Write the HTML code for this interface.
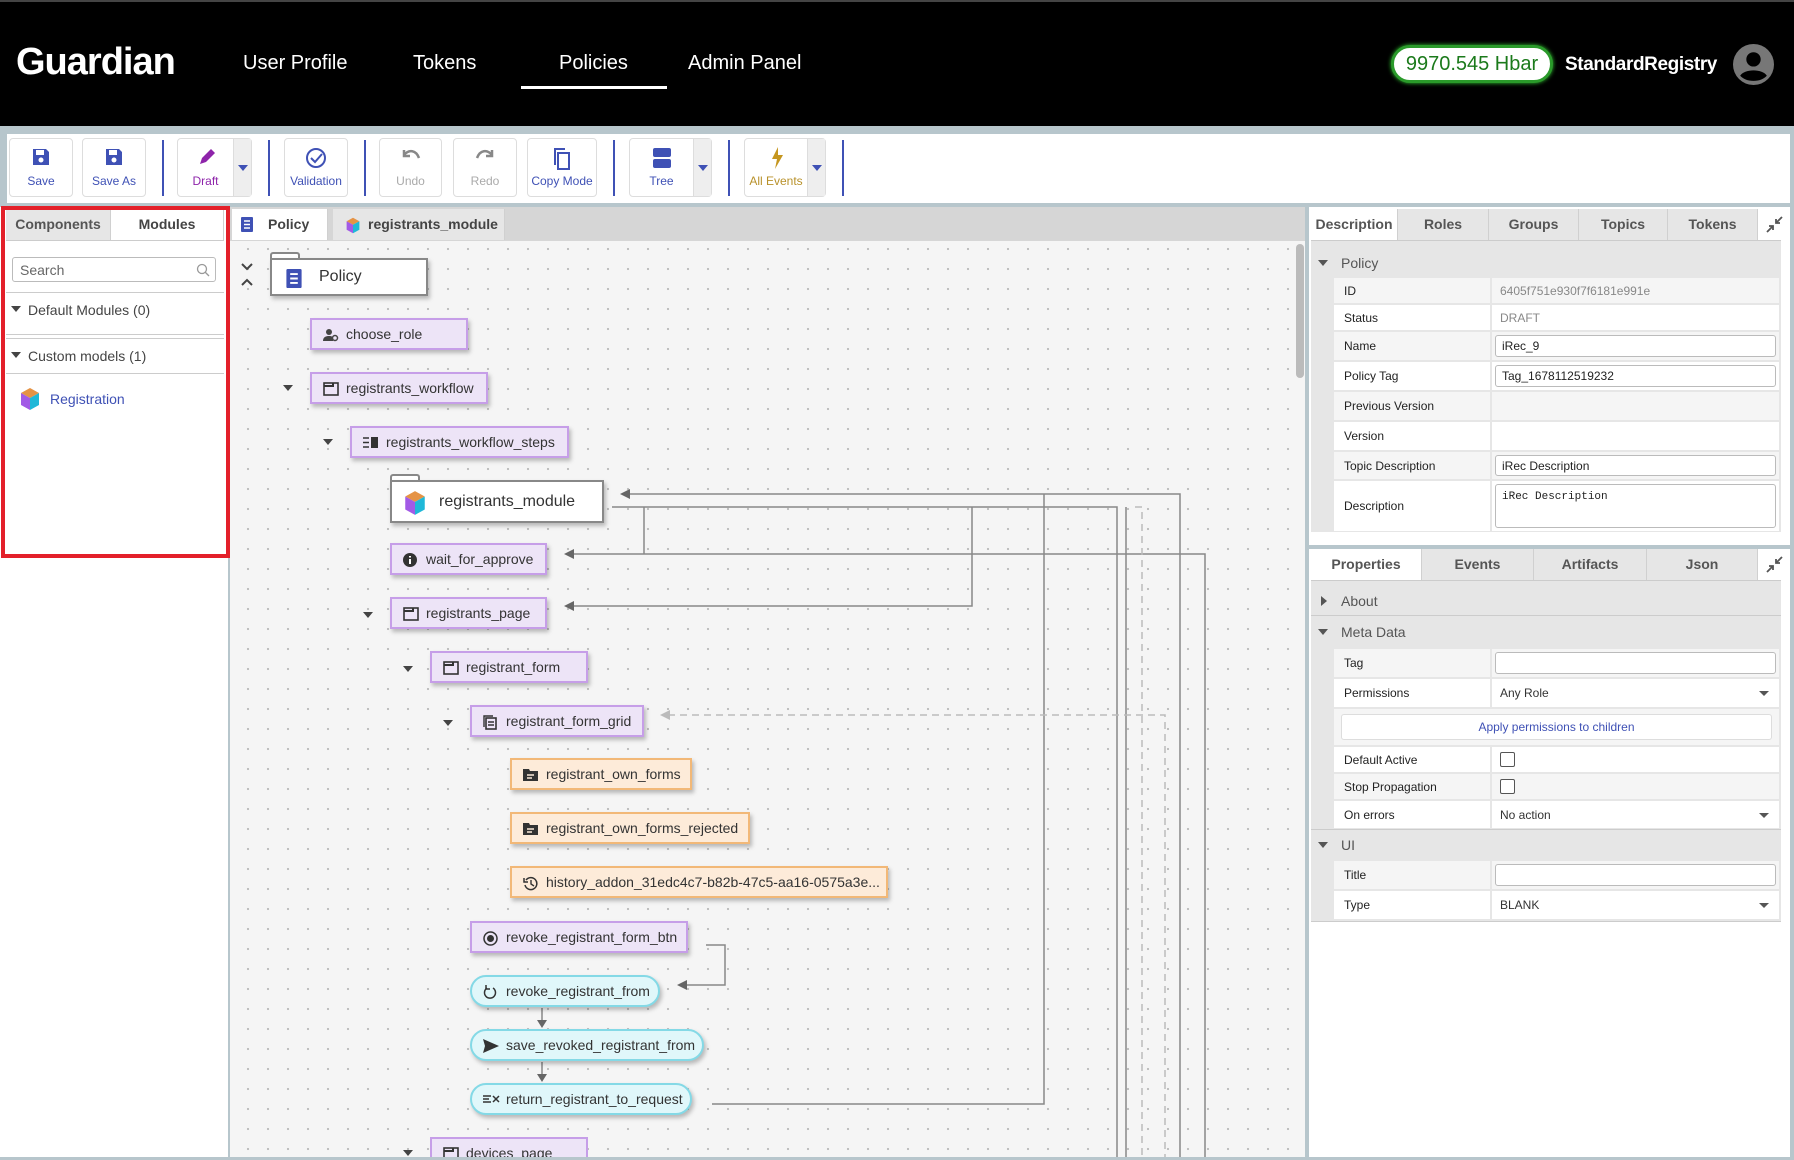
<!DOCTYPE html>
<html><head><meta charset="utf-8"><style>
*{box-sizing:border-box;margin:0;padding:0}
html,body{width:1794px;height:1160px;overflow:hidden}
body{background:#b7c6cc;font-family:"Liberation Sans",sans-serif;position:relative}
.a{position:absolute}
#hdr{left:0;top:0;width:1794px;height:126px;background:#000;border-top:2px solid #444}
.nav{color:#fff;font-size:20px;top:50px}
#tb{left:7px;top:134px;width:1783px;height:69px;background:#fff}
.btn{top:4px;height:59px;border:1px solid #ddd;border-radius:4px;background:#fff;text-align:center;font-size:12px;color:#3f51b5}
.btn span{position:absolute;left:0;right:0;bottom:8px}
.btn svg{position:absolute;left:50%;top:8px;transform:translateX(-50%)}
.dd{position:absolute;right:0;top:0;bottom:0;width:18px;background:#eee;border-left:1px solid #ddd}
.dd:after{content:"";position:absolute;left:4px;top:26px;border:5px solid transparent;border-top:6px solid #3f51b5}
.sep{top:6px;width:2px;height:56px;background:#3f51b5}
.panel{background:#fff}
.tab{position:absolute;top:0;height:31px;font-size:14px;font-weight:bold;color:#555;text-align:center;line-height:31px;background:#e6e6e6;border-right:1px solid #d0d0d0}
.node{position:absolute;height:32px;background:#ede4f7;border:2px solid #c69ee8;box-shadow:2px 3px 4px rgba(0,0,0,.25);font-size:14px;color:#333;line-height:28px;padding-left:34px;white-space:nowrap;overflow:hidden}
.or{background:#fdebd9;border-color:#f2b877}
.cy{background:#e0f7fa;border-color:#84d9e6;border-radius:17px}
.ic{position:absolute;left:11px;top:8px}
.car{position:absolute;width:0;height:0;border:5px solid transparent;border-top:6px solid #444}
.row{position:absolute;left:1334px;width:445px;font-size:12px;color:#222}
.row .l{position:absolute;left:0;top:0;bottom:0;width:156px;background:#f5f5f5;padding-left:10px;display:flex;align-items:center}
.row .v{position:absolute;left:158px;right:0;top:0;bottom:0;background:#f5f5f5;padding-left:8px;display:flex;align-items:center;color:#888}
.row.w .l,.row.w .v{background:#fff}
.inp{position:absolute;left:3px;right:3px;top:3px;bottom:3px;border:1px solid #bbb;border-radius:3px;background:#fff;padding-left:6px;display:flex;align-items:center;color:#222}
.sec{position:absolute;left:1311px;width:470px;background:#e6e6e6;font-size:14px;color:#555;padding-left:30px;display:flex;align-items:center}
.sec:before{content:"";position:absolute;left:7px;top:50%;margin-top:-3px;border:5px solid transparent;border-top:6px solid #555}
.sec.c:before{border:5px solid transparent;border-left:6px solid #555;margin-top:-5px;left:10px}
.sel:after{content:"";position:absolute;right:10px;top:50%;margin-top:-2px;border:5px solid transparent;border-top:5px solid #555}
.cb{width:15px;height:15px;border:1.5px solid #555;border-radius:2px;background:#fff}
</style></head><body>
<div id="hdr" class="a">
<div class="a" style="left:16px;top:39px;color:#fff;font-size:38px;font-weight:bold;letter-spacing:-1px">Guardian</div>
<div class="a nav" style="left:243px">User Profile</div>
<div class="a nav" style="left:413px">Tokens</div>
<div class="a nav" style="left:559px">Policies</div>
<div class="a" style="left:521px;top:84px;width:146px;height:3px;background:#fff"></div>
<div class="a nav" style="left:688px">Admin Panel</div>
<div class="a" style="left:1391px;top:43px;width:162px;height:38px;border-radius:19px;background:#fff;border:3px solid #2a9a2a;box-shadow:0 0 4px #3c3;color:#1b7a1b;font-size:20px;text-align:center;line-height:32px">9970.545 Hbar</div>
<div class="a" style="left:1565px;top:52px;color:#fff;font-size:19px;font-weight:bold;letter-spacing:-0.4px">StandardRegistry</div>
<svg class="a" style="left:1733px;top:42px" width="41" height="41" viewBox="0 0 40 40"><circle cx="20" cy="20" r="20" fill="#777"/><circle cx="20" cy="15" r="7" fill="#000"/><path d="M7 31c4-7 22-7 26 0c-3 3-7 5-13 5s-10-2-13-5z" fill="#000"/></svg>
</div>
<div id="tb" class="a">
<div class="a btn" style="left:2px;width:64px"><svg width="20" height="20" viewBox="0 0 20 20"><path d="M2 2h13l3 3v13H2z" fill="#3f51b5"/><rect x="5" y="3" width="8" height="5" fill="#fff"/><circle cx="10" cy="13" r="2.5" fill="#fff"/></svg><span>Save</span></div>
<div class="a btn" style="left:75px;width:64px"><svg width="20" height="20" viewBox="0 0 20 20"><path d="M2 2h13l3 3v13H2z" fill="#3f51b5"/><rect x="5" y="3" width="8" height="5" fill="#fff"/><circle cx="10" cy="13" r="2.5" fill="#fff"/></svg><span>Save As</span></div>
<div class="a sep" style="left:155px"></div>
<div class="a btn" style="left:170px;width:75px;color:#8e24aa"><svg style="left:29px" width="20" height="20" viewBox="0 0 20 20"><path d="M3 17l2-6 9-9 4 4-9 9z" fill="#8e24aa"/></svg><span style="right:18px">Draft</span><div class="dd"></div></div>
<div class="a sep" style="left:261px"></div>
<div class="a btn" style="left:277px;width:64px"><svg width="22" height="22" viewBox="0 0 22 22"><circle cx="11" cy="11" r="9" fill="none" stroke="#3f51b5" stroke-width="2"/><path d="M6 11l4 4 7-8" fill="none" stroke="#3f51b5" stroke-width="2"/></svg><span>Validation</span></div>
<div class="a sep" style="left:357px"></div>
<div class="a btn" style="left:372px;width:63px;color:#aaa"><svg width="22" height="16" viewBox="0 0 22 16"><path d="M4 8c5-6 12-5 15 3M4 3v6h6" fill="none" stroke="#888" stroke-width="2.5"/></svg><span>Undo</span></div>
<div class="a btn" style="left:446px;width:64px;color:#aaa"><svg width="22" height="16" viewBox="0 0 22 16"><path d="M18 8c-5-6-12-5-15 3M18 3v6h-6" fill="none" stroke="#888" stroke-width="2.5"/></svg><span>Redo</span></div>
<div class="a btn" style="left:520px;width:70px"><svg width="20" height="24" viewBox="0 0 20 24"><rect x="6" y="6" width="11" height="16" fill="none" stroke="#3f51b5" stroke-width="2"/><path d="M3 18V2h10" fill="none" stroke="#3f51b5" stroke-width="2"/></svg><span>Copy Mode</span></div>
<div class="a sep" style="left:606px"></div>
<div class="a btn" style="left:622px;width:83px"><svg style="left:32px" width="20" height="22" viewBox="0 0 20 22"><rect x="1" y="1" width="18" height="9" rx="2" fill="#3f51b5"/><rect x="1" y="12" width="18" height="9" rx="2" fill="#3f51b5"/></svg><span style="right:18px">Tree</span><div class="dd"></div></div>
<div class="a sep" style="left:721px"></div>
<div class="a btn" style="left:737px;width:82px;color:#b8912a"><svg style="left:32px" width="14" height="22" viewBox="0 0 14 22"><path d="M8 0L2 12h5l-2 10 8-14H8z" fill="#c5961f"/></svg><span style="right:18px">All Events</span><div class="dd"></div></div>
<div class="a sep" style="left:835px"></div>
</div>

<div class="a panel" style="left:0;top:207px;width:228px;height:951px"></div>
<div class="a tab" style="left:6px;top:209px;width:105px">Components</div>
<div class="a tab" style="left:111px;top:209px;width:113px;background:#fff;color:#444">Modules</div>
<div class="a" style="left:6px;top:240px;width:218px;height:1px;background:#ccc"></div>
<div class="a" style="left:12px;top:257px;width:204px;height:25px;border:1px solid #bbb;border-radius:3px;font-size:14px;color:#666;padding:4px 7px">Search<svg class="a" style="right:5px;top:5px" width="14" height="14" viewBox="0 0 14 14"><circle cx="6" cy="6" r="4.5" fill="none" stroke="#999" stroke-width="1.3"/><path d="M9 9l4 4" stroke="#999" stroke-width="1.3"/></svg></div>
<div class="a" style="left:6px;top:292px;width:218px;height:1px;background:#ccc"></div>
<div class="car" style="left:11px;top:306px"></div>
<div class="a" style="left:28px;top:302px;font-size:14px;color:#444">Default Modules (0)</div>
<div class="a" style="left:6px;top:334px;width:218px;height:1px;background:#ccc"></div>
<div class="a" style="left:6px;top:338px;width:218px;height:1px;background:#ccc"></div>
<div class="car" style="left:11px;top:352px"></div>
<div class="a" style="left:28px;top:348px;font-size:14px;color:#444">Custom models (1)</div>
<div class="a" style="left:6px;top:373px;width:218px;height:1px;background:#ccc"></div>
<svg class="a" style="left:19px;top:387px" width="22" height="24" viewBox="0 0 22 24"><path d="M11 1l9 5-9 5-9-5z" fill="#e59345"/><path d="M2 6l9 5v12l-9-5z" fill="#a25ae6"/><path d="M20 6l-9 5v12l9-5z" fill="#1fb8d8"/></svg>
<div class="a" style="left:50px;top:391px;font-size:14px;color:#3f51b5">Registration</div>
<div class="a" style="left:1px;top:206px;width:229px;height:352px;border:4px solid #e3202a"></div>

<div class="a" style="left:230px;top:207px;width:1075px;height:951px;background-color:#f5f5f5;background-image:radial-gradient(circle,#bdbdbd 1px,transparent 1.3px);background-size:20px 20px;background-position:8px 12px"></div>
<div class="a" style="left:230px;top:207px;width:1075px;height:34px;background:#d6d6d6"></div>
<div class="a tab" style="left:232px;top:209px;width:96px;background:#fff;color:#444;text-align:left;padding-left:36px">Policy<svg class="a" style="left:9px;top:8px" width="12" height="15" viewBox="0 0 12 15"><rect width="12" height="15" rx="1" fill="#3f51b5"/><path d="M3 4h6M3 7.5h6M3 11h6" stroke="#fff" stroke-width="1.5"/></svg></div>
<div class="a tab" style="left:333px;top:209px;width:172px;text-align:left;padding-left:35px;color:#444">registrants_module<svg class="a" style="left:12px;top:8px" width="16" height="17" viewBox="0 0 22 24"><path d="M11 1l9 5-9 5-9-5z" fill="#e59345"/><path d="M2 6l9 5v12l-9-5z" fill="#a25ae6"/><path d="M20 6l-9 5v12l9-5z" fill="#1fb8d8"/></svg></div>
<div class="a" style="left:1296px;top:244px;width:8px;height:134px;background:#bbb;border-radius:4px"></div>
<svg class="a" style="left:240px;top:262px" width="14" height="26" viewBox="0 0 14 26"><path d="M2 2l5 5 5-5M2 23l5-5 5 5" fill="none" stroke="#444" stroke-width="2"/></svg>

<svg class="a" style="left:0;top:0" width="1794" height="1160">
<g fill="none" stroke="#888" stroke-width="1.5">
<path d="M626 494H1180V1158"/><path d="M612 507H1117V1158"/><path d="M1126 507V1158"/>
<path d="M644 507V554"/><path d="M972 507V606H572"/>
<path d="M574 554H1205V1158"/>
<path d="M1044 494V1104H712"/>
<path d="M706 945H725V985H684"/>
<path d="M542 1008V1022M542 1062V1076"/>
</g>
<g fill="none" stroke="#bbb" stroke-width="1.5" stroke-dasharray="7 5"><path d="M668 715H1165V1158"/><path d="M1135 507H1142V1158"/></g>
<g fill="#666"><path d="M620 494l10-5v10z"/><path d="M564 554l10-5v10z"/><path d="M564 606l10-5v10z"/><path d="M677 985l10-5v10z"/><path d="M537 1020h10l-5 8z"/><path d="M537 1074h10l-5 8z"/></g>
<path d="M660 715l10-5v10z" fill="#bbb"/>
</svg>

<div class="a" style="left:270px;top:252px;width:30px;height:10px;border:2px solid #888;border-bottom:none;background:#fff;border-radius:3px 3px 0 0"></div>
<div class="node" style="left:270px;top:258px;width:158px;height:38px;background:#fff;border-color:#888;font-size:16px;line-height:34px;padding-left:47px">Policy<svg class="ic" style="left:14px;top:9px" width="16" height="19" viewBox="0 0 12 15"><rect width="12" height="15" rx="1" fill="#3f51b5"/><path d="M3 4h6M3 7.5h6M3 11h6" stroke="#fff" stroke-width="1.5"/></svg></div>
<div class="node" style="left:310px;top:318px;width:158px">choose_role<svg class="ic" width="16" height="14" viewBox="0 0 16 14"><circle cx="6" cy="4" r="3" fill="#444"/><path d="M0 13c0-4 3-5 6-5s4 1 4 2v3z" fill="#444"/><circle cx="12" cy="10" r="2.5" fill="none" stroke="#444" stroke-width="1.5"/></svg></div>
<div class="car" style="left:283px;top:385px"></div>
<div class="node" style="left:310px;top:372px;width:178px">registrants_workflow<svg class="ic" width="16" height="14" viewBox="0 0 16 14"><rect x="1" y="1" width="14" height="12" fill="none" stroke="#333" stroke-width="1.6"/><path d="M1 4h9V1" fill="none" stroke="#333" stroke-width="2"/></svg></div>
<div class="car" style="left:323px;top:439px"></div>
<div class="node" style="left:350px;top:426px;width:219px">registrants_workflow_steps<svg class="ic" width="16" height="13" viewBox="0 0 16 13"><path d="M0 2h6M0 6.5h6M0 11h6" stroke="#333" stroke-width="1.6"/><rect x="8" y="1" width="7" height="11" fill="#333"/></svg></div>
<div class="a" style="left:390px;top:474px;width:30px;height:10px;border:2px solid #888;border-bottom:none;background:#fff;border-radius:3px 3px 0 0"></div>
<div class="node" style="left:390px;top:480px;width:214px;height:43px;background:#fff;border-color:#888;font-size:16px;line-height:39px;padding-left:47px">registrants_module<svg class="ic" style="left:11px;top:8px" width="24" height="26" viewBox="0 0 22 24"><path d="M11 1l9 5-9 5-9-5z" fill="#e59345"/><path d="M2 6l9 5v12l-9-5z" fill="#a25ae6"/><path d="M20 6l-9 5v12l9-5z" fill="#1fb8d8"/></svg></div>
<div class="node" style="left:390px;top:543px;width:157px">wait_for_approve<svg class="ic" width="14" height="14" viewBox="0 0 14 14"><circle cx="7" cy="7" r="7" fill="#333"/><path d="M7 6v5M7 3v1.5" stroke="#fff" stroke-width="2"/></svg></div>
<div class="car" style="left:363px;top:612px"></div>
<div class="node" style="left:390px;top:597px;width:157px">registrants_page<svg class="ic" width="16" height="14" viewBox="0 0 16 14"><rect x="1" y="1" width="14" height="12" fill="none" stroke="#333" stroke-width="1.6"/><path d="M1 4h9V1" fill="none" stroke="#333" stroke-width="2"/></svg></div>
<div class="car" style="left:403px;top:666px"></div>
<div class="node" style="left:430px;top:651px;width:158px">registrant_form<svg class="ic" width="16" height="14" viewBox="0 0 16 14"><rect x="1" y="1" width="14" height="12" fill="none" stroke="#333" stroke-width="1.6"/><path d="M1 4h9V1" fill="none" stroke="#333" stroke-width="2"/></svg></div>
<div class="car" style="left:443px;top:720px"></div>
<div class="node" style="left:470px;top:705px;width:174px">registrant_form_grid<svg class="ic" width="14" height="15" viewBox="0 0 14 15"><rect x="3" y="3" width="10" height="11" fill="none" stroke="#333" stroke-width="1.6"/><path d="M1 12V1h9M5 7h6M5 10h6" stroke="#333" stroke-width="1.4" fill="none"/></svg></div>
<div class="node or" style="left:510px;top:758px;width:182px">registrant_own_forms<svg class="ic" width="15" height="13" viewBox="0 0 15 13"><path d="M0 1h6l1 2h8v10H0z" fill="#333"/><path d="M4 7h7M4 10h5" stroke="#fdebd9" stroke-width="1.4"/></svg></div>
<div class="node or" style="left:510px;top:812px;width:240px">registrant_own_forms_rejected<svg class="ic" width="15" height="13" viewBox="0 0 15 13"><path d="M0 1h6l1 2h8v10H0z" fill="#333"/><path d="M4 7h7M4 10h5" stroke="#fdebd9" stroke-width="1.4"/></svg></div>
<div class="node or" style="left:510px;top:866px;width:378px">history_addon_31edc4c7-b82b-47c5-aa16-0575a3e...<svg class="ic" width="15" height="15" viewBox="0 0 15 15"><path d="M3 4a6 6 0 1 1-1 5" fill="none" stroke="#333" stroke-width="1.5"/><path d="M1 2v4h4" fill="none" stroke="#333" stroke-width="1.5"/><path d="M8 4v4l3 2" fill="none" stroke="#333" stroke-width="1.4"/></svg></div>
<div class="node" style="left:470px;top:921px;width:218px">revoke_registrant_form_btn<svg class="ic" width="15" height="15" viewBox="0 0 15 15"><circle cx="7.5" cy="7.5" r="6.5" fill="none" stroke="#333" stroke-width="1.5"/><circle cx="7.5" cy="7.5" r="3.5" fill="#333"/></svg></div>
<div class="node cy" style="left:470px;top:975px;width:190px">revoke_registrant_from<svg class="ic" width="14" height="14" viewBox="0 0 14 14"><path d="M4 3a5.5 5.5 0 1 0 6 0" fill="none" stroke="#333" stroke-width="1.5"/><path d="M3 0v4h4" fill="none" stroke="#333" stroke-width="1.5"/></svg></div>
<div class="node cy" style="left:470px;top:1029px;width:234px">save_revoked_registrant_from<svg class="ic" width="16" height="14" viewBox="0 0 16 14"><path d="M0 0l16 7-16 7 2-7z" fill="#333"/></svg></div>
<div class="node cy" style="left:470px;top:1083px;width:222px">return_registrant_to_request<svg class="ic" width="17" height="12" viewBox="0 0 17 12"><path d="M0 3h8M0 6h6M0 9h8M10 3l6 6M16 3l-6 6" stroke="#333" stroke-width="1.5"/></svg></div>
<div class="car" style="left:403px;top:1150px"></div>
<div class="node" style="left:430px;top:1137px;width:158px;height:21px;border-bottom:none;box-shadow:none">devices_page<svg class="ic" width="16" height="14" viewBox="0 0 16 14"><rect x="1" y="1" width="14" height="12" fill="none" stroke="#333" stroke-width="1.6"/><path d="M1 4h9V1" fill="none" stroke="#333" stroke-width="2"/></svg></div>

<div class="a panel" style="left:1309px;top:207px;width:481px;height:951px"></div>
<div class="a" style="left:1309px;top:532px;width:481px;height:17px;background:#fff;border-bottom:4px solid #b7c6cc"></div>
<div class="a tab" style="left:1311px;top:209px;width:87px;background:#fff;color:#555">Description</div>
<div class="a tab" style="left:1398px;top:209px;width:91px">Roles</div>
<div class="a tab" style="left:1489px;top:209px;width:90px">Groups</div>
<div class="a tab" style="left:1579px;top:209px;width:89px">Topics</div>
<div class="a tab" style="left:1668px;top:209px;width:90px">Tokens</div>
<div class="a tab" style="left:1758px;top:209px;width:32px;background:#fff;border:none"><svg class="a" style="left:8px;top:7px" width="17" height="17" viewBox="0 0 17 17"><path d="M1 16l6-6M3 10h4v4M16 1l-6 6M10 3v4h4" fill="none" stroke="#555" stroke-width="1.8"/></svg></div>
<div class="a" style="left:1311px;top:240px;width:470px;height:1px;background:#ccc"></div>
<div class="a" style="left:1311px;top:241px;width:470px;height:291px;background:#e6e6e6"></div>
<div class="sec" style="top:250px;height:25px">Policy</div>
<div class="row" style="top:278px;height:25px"><div class="l">ID</div><div class="v">6405f751e930f7f6181e991e</div></div>
<div class="row w" style="top:305px;height:25px"><div class="l">Status</div><div class="v">DRAFT</div></div>
<div class="row" style="top:332px;height:28px"><div class="l">Name</div><div class="v"><div class="inp">iRec_9</div></div></div>
<div class="row w" style="top:362px;height:28px"><div class="l">Policy Tag</div><div class="v"><div class="inp">Tag_1678112519232</div></div></div>
<div class="row" style="top:392px;height:28px"><div class="l">Previous Version</div><div class="v"></div></div>
<div class="row w" style="top:422px;height:28px"><div class="l">Version</div><div class="v"></div></div>
<div class="row" style="top:452px;height:27px"><div class="l">Topic Description</div><div class="v"><div class="inp">iRec Description</div></div></div>
<div class="row w" style="top:481px;height:50px"><div class="l">Description</div><div class="v"><div class="inp" style="align-items:flex-start;padding-top:6px;font-family:'Liberation Mono',monospace;font-size:11px">iRec Description</div></div></div>

<div class="a tab" style="left:1311px;top:549px;width:111px;background:#fff">Properties</div>
<div class="a tab" style="left:1422px;top:549px;width:112px">Events</div>
<div class="a tab" style="left:1534px;top:549px;width:113px">Artifacts</div>
<div class="a tab" style="left:1647px;top:549px;width:111px">Json</div>
<div class="a tab" style="left:1758px;top:549px;width:32px;background:#fff;border:none"><svg class="a" style="left:8px;top:7px" width="17" height="17" viewBox="0 0 17 17"><path d="M1 16l6-6M3 10h4v4M16 1l-6 6M10 3v4h4" fill="none" stroke="#555" stroke-width="1.8"/></svg></div>
<div class="a" style="left:1311px;top:580px;width:470px;height:1px;background:#ccc"></div>
<div class="a" style="left:1311px;top:581px;width:470px;height:340px;background:#e6e6e6"></div>
<div class="sec c" style="top:587px;height:29px;border-bottom:1px solid #ccc">About</div>
<div class="sec" style="top:617px;height:29px">Meta Data</div>
<div class="row" style="top:649px;height:28px"><div class="l">Tag</div><div class="v"><div class="inp"></div></div></div>
<div class="row w sel" style="top:679px;height:28px"><div class="l">Permissions</div><div class="v" style="color:#333">Any Role</div></div>
<div class="row" style="top:709px;height:36px"><div class="l" style="width:100%"></div><div class="a" style="left:7px;right:7px;top:5px;bottom:5px;border:1px solid #ddd;border-radius:3px;background:#fff;text-align:center;line-height:24px;color:#3f51b5">Apply permissions to children</div></div>
<div class="row w" style="top:747px;height:25px"><div class="l">Default Active</div><div class="v"><div class="cb"></div></div></div>
<div class="row" style="top:774px;height:25px"><div class="l">Stop Propagation</div><div class="v"><div class="cb"></div></div></div>
<div class="row w sel" style="top:801px;height:27px"><div class="l">On errors</div><div class="v" style="color:#333">No action</div></div>
<div class="a" style="left:1311px;top:829px;width:470px;height:1px;background:#ccc"></div>
<div class="sec" style="top:830px;height:29px">UI</div>
<div class="row" style="top:861px;height:28px"><div class="l">Title</div><div class="v"><div class="inp"></div></div></div>
<div class="row w sel" style="top:891px;height:28px"><div class="l">Type</div><div class="v" style="color:#333">BLANK</div></div>
<div class="a" style="left:1311px;top:921px;width:470px;height:1px;background:#ccc"></div>
<div class="a" style="left:0;top:1157px;width:1794px;height:3px;background:#b7c6cc"></div>
</body></html>
